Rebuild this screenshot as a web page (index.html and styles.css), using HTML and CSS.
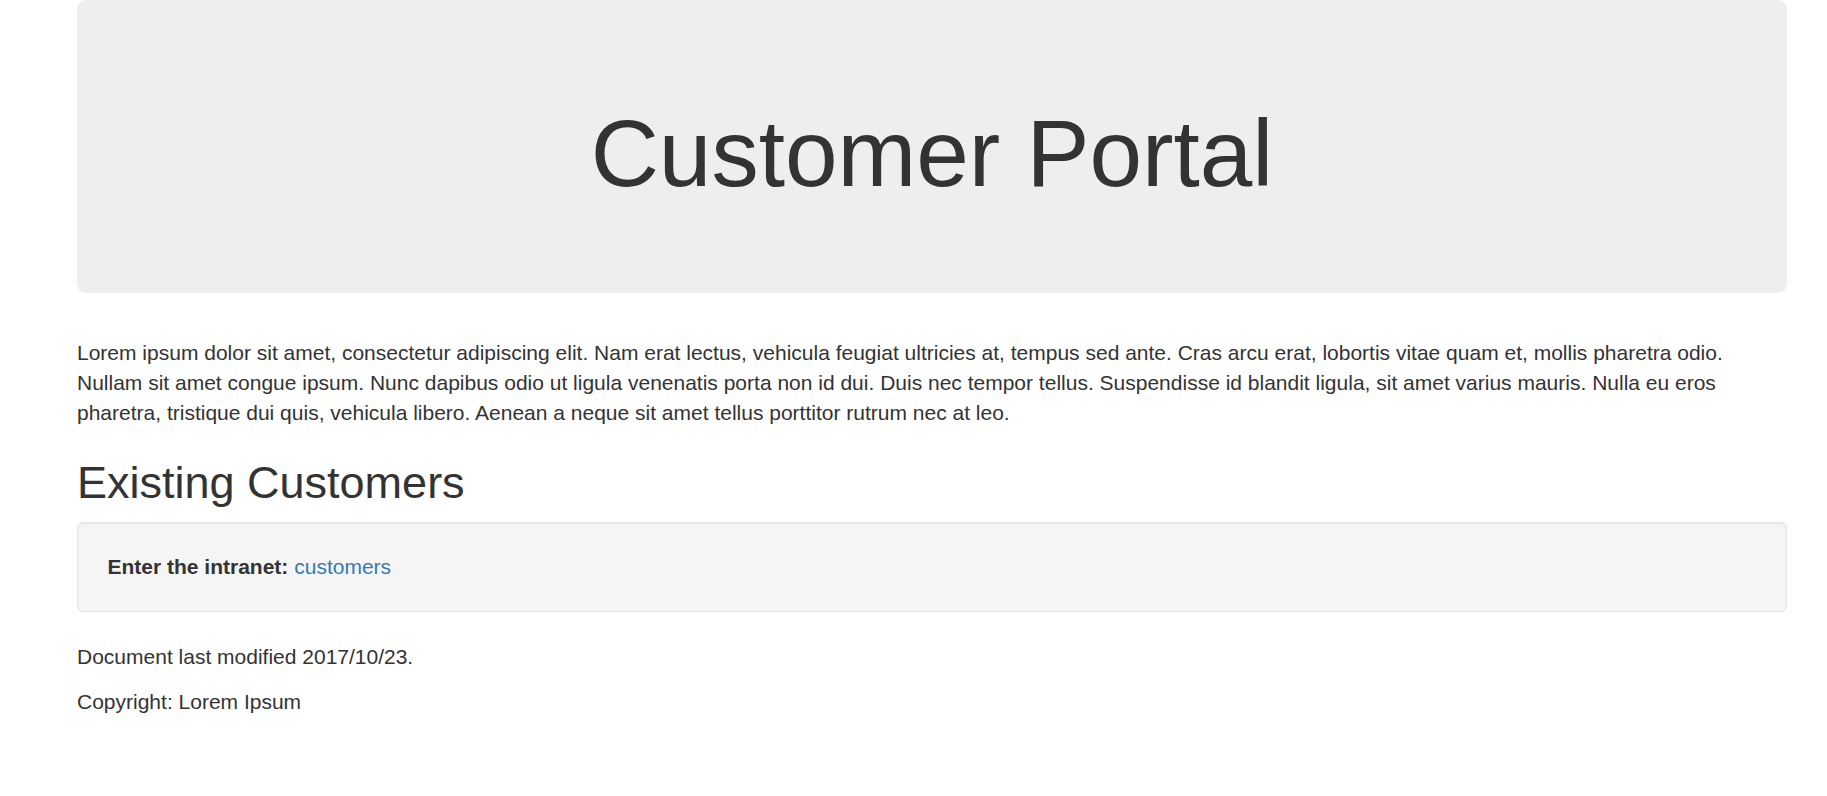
FILE: index.html
```html
<!DOCTYPE html>
<html lang="en">
<head>
<meta charset="utf-8">
<title>Customer Portal</title>
<link rel="stylesheet" href="styles.css">
</head>
<body>
<div class="container">
  <div class="jumbotron">
    <h1>Customer Portal</h1>
  </div>
  <p>Lorem ipsum dolor sit amet, consectetur adipiscing elit. Nam erat lectus, vehicula feugiat ultricies at, tempus sed ante. Cras arcu erat, lobortis vitae quam et, mollis pharetra odio. Nullam sit amet congue ipsum. Nunc dapibus odio ut ligula venenatis porta non id dui. Duis nec tempor tellus. Suspendisse id blandit ligula, sit amet varius mauris. Nulla eu eros pharetra, tristique dui quis, vehicula libero. Aenean a neque sit amet tellus porttitor rutrum nec at leo.</p>
  <h2>Existing Customers</h2>
  <div class="well"><strong>Enter the intranet:</strong> <a href="#">customers</a></div>
  <p>Document last modified 2017/10/23.</p>
  <p>Copyright: Lorem Ipsum</p>
</div>
</body>
</html>
```
FILE: styles.css
```css
html, body {
  margin: 0;
  padding: 0;
  background: #fff;
}
body {
  font-family: "Liberation Sans", Arial, Helvetica, sans-serif;
  font-size: 21px;
  line-height: 30px;
  color: #333;
}
.container {
  padding: 0 40px 0 77px;
}
.jumbotron {
  background: #eee;
  border-radius: 9px;
  padding: 72px 90px;
  margin-bottom: 45px;
  text-align: center;
}
.jumbotron h1 {
  margin: 30px 0 15px;
  font-size: 94.5px;
  line-height: 1.1;
  font-weight: 500;
  color: #333;
}
p {
  margin: 0 0 15px;
}
h2 {
  margin: 30px 0 15px;
  font-size: 45px;
  line-height: 1.1;
  font-weight: 500;
}
.well {
  background: #f5f5f5;
  border: 1px solid #e3e3e3;
  border-radius: 6px;
  box-shadow: inset 0 1.5px 1.5px rgba(0,0,0,.05);
  padding: 29px 29px 29px 29.5px;
  margin-bottom: 30px;
}
.well strong {
  font-weight: 700;
}
a {
  color: #337ab7;
  text-decoration: none;
}
```
